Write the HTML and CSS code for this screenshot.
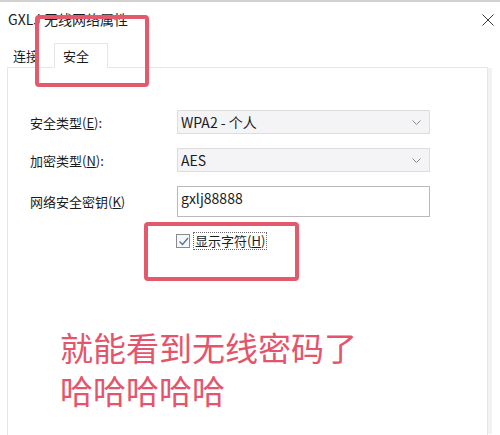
FILE: index.html
```html
<!DOCTYPE html>
<html lang="zh-CN">
<head>
<meta charset="utf-8">
<link rel="stylesheet" href="styles.css">
</head>
<body>
<div class="window">
  <div class="titlebar">
    <span class="title">GXLJ 无线网络属性</span>
    <svg class="close" width="12" height="12" viewBox="0 0 12 12"><path d="M0.5 0.5 L11.5 11.5 M11.5 0.5 L0.5 11.5" stroke="#3a3a3a" stroke-width="1" fill="none"/></svg>
  </div>
  <div class="tabs">
    <div class="tab">连接</div>
    <div class="tab active">安全</div>
  </div>
  <div class="panel">
    <div class="form">
      <div class="label">安全类型(<u>E</u>):</div>
      <div class="combo"><span>WPA2 - 个人</span><svg class="chev" width="9" height="5" viewBox="0 0 9 5"><path d="M0.5 0.5 L4.5 4.5 L8.5 0.5" stroke="#8a8a8a" fill="none"/></svg></div>
      <div class="label">加密类型(<u>N</u>):</div>
      <div class="combo"><span>AES</span><svg class="chev" width="9" height="5" viewBox="0 0 9 5"><path d="M0.5 0.5 L4.5 4.5 L8.5 0.5" stroke="#8a8a8a" fill="none"/></svg></div>
      <div class="label">网络安全密钥(<u>K</u>)</div>
      <div class="textbox">gxlj88888</div>
    </div>
    <div class="check-row">
      <span class="checkbox"><svg width="11" height="11" viewBox="0 0 11 11"><path d="M1.5 5.5 L4.5 8.5 L10 2" stroke="#4f6f94" stroke-width="1.2" fill="none"/></svg></span>
      <span class="check-label">显示字符(<u>H</u>)</span>
    </div>
    <div class="note">
      <div class="note-line">就能看到无线密码了</div>
      <div class="note-line">哈哈哈哈哈</div>
    </div>
  </div>
  <div class="mark mark-tab"></div>
  <div class="mark mark-check"></div>
</div>
</body>
</html>
```
FILE: styles.css
```css
* { box-sizing: border-box; }
html, body { margin: 0; padding: 0; }
body {
  width: 500px;
  height: 435px;
  overflow: hidden;
  background: #ffffff;
  font-family: "Noto Sans CJK SC", "Noto Sans", sans-serif;
  color: #1b1b1b;
}
.window {
  position: relative;
  width: 500px;
  height: 435px;
  border-top: 2px solid #d2d2d2;
  display: flex;
  flex-direction: column;
  overflow: hidden;
}
.titlebar {
  height: 34px;
  flex: none;
  display: flex;
  align-items: center;
  justify-content: space-between;
  padding: 0 6px 0 8px;
}
.title {
  font-size: 14px;
  color: #1a1a1a;
}
.close { display: block; margin-top: 2px; }
.tabs {
  display: flex;
  flex: none;
  align-items: flex-end;
  height: 24px;
  margin-top: 7px;
  padding-left: 12px;
  position: relative;
  z-index: 1;
}
.tab {
  font-size: 13px;
  line-height: 18px;
  padding: 0 1px 2px;
  margin-right: 14px;
  color: #1b1b1b;
}
.tab.active {
  height: 25px;
  margin-bottom: -1px;
  padding: 3px 18px 0 8px;
  border: 1px solid #e6e6e6;
  border-bottom: 1px solid #ffffff;
  background: #ffffff;
}
.panel {
  flex: 1;
  margin: 0 12px 0 7px;
  border: 1px solid #e6e6e6;
  border-bottom: 0;
  box-shadow: 5px 0 0 -1px #f2f2f2;
  padding: 42px 0 0 22px;
}
.form {
  display: grid;
  grid-template-columns: 147px 253px;
  row-gap: 14px;
  align-items: center;
}
.label {
  font-size: 13px;
  color: #1b1b1b;
}
.combo {
  height: 24px;
  background: #f4f4f6;
  border: 1px solid #dedede;
  display: flex;
  align-items: center;
  justify-content: space-between;
  padding: 0 8px 0 3px;
  font-size: 14px;
}
.chev { display: block; }
.textbox {
  height: 31px;
  border: 1px solid #b9b9b9;
  background: #ffffff;
  font-size: 14px;
  padding: 1px 0 0 3px;
  line-height: 20px;
}
.check-row {
  display: flex;
  align-items: center;
  margin-top: 15px;
  padding-left: 146px;
  height: 18px;
}
.checkbox {
  width: 14px;
  height: 14px;
  border: 1px solid #8a8a8a;
  background: #f4f6fa;
  display: flex;
  align-items: center;
  justify-content: center;
  margin-right: 3px;
}
.check-label {
  font-size: 13px;
  border: 1px dotted #6a6a6a;
  padding: 0 1px;
  line-height: 16px;
}
.note {
  margin: 76px 0 0 30px;
  display: flex;
  flex-direction: column;
  gap: 0;
}
.note-line {
  font-size: 33px;
  line-height: 43px;
  height: 43px;
  overflow: visible;
  color: #e4556b;
}
.mark {
  position: absolute;
  border: 4px solid #e25a6c;
  border-radius: 4px;
  z-index: 2;
}
.mark-tab {
  left: 35px;
  top: 13px;
  width: 114px;
  height: 72px;
}
.mark-check {
  left: 144px;
  top: 220px;
  width: 155px;
  height: 59px;
}
```
